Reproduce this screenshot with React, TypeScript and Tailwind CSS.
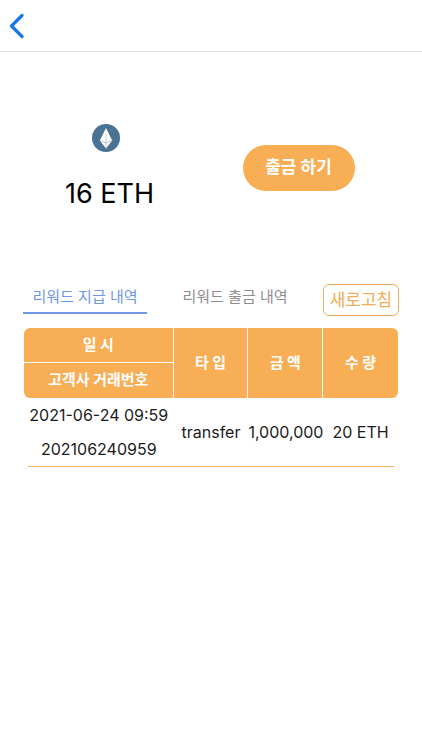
const headCell = "border-white bg-[#f7ae55] p-0 text-[15px] font-bold text-white";
const bodyCell = "p-0 text-[#1b1b1b]";

const rewards = [
  {
    date: "2021-06-24 09:59",
    reference: "202106240959",
    type: "transfer",
    amount: "1,000,000",
    quantity: "20 ETH",
  },
];

function EthereumIcon() {
  return (
    <svg className="size-7" viewBox="0 0 28 28" aria-hidden="true">
      <circle cx="14" cy="14" r="14" fill="#4a7293" />
      <path d="M14 4 L20.2 16.6 L14 24.6 L7.8 16.6 Z" fill="#fff" />
      <path d="M14 10 V24.6 M7.8 16.6 L14 18.8 L20.2 16.6" fill="none" stroke="#a9b3bb" strokeWidth="0.7" />
    </svg>
  );
}

export default function App() {
  return (
    <div className="min-h-screen bg-white font-['Inter','Noto_Sans_CJK_KR',sans-serif] text-black">
      <header className="flex h-[52px] items-center border-b border-[#e4e4e4] px-2">
        <button type="button" aria-label="뒤로" className="flex h-8 w-6 items-center">
          <svg className="h-7 w-4" viewBox="0 0 16 28" fill="none" aria-hidden="true">
            <path d="M14 3.5 L3.5 14 L14 24.5" stroke="#1877e8" strokeWidth="3.2" strokeLinecap="round" strokeLinejoin="round" />
          </svg>
        </button>
      </header>

      <main>
        <section className="grid grid-cols-2 pt-[72px]">
          <div className="flex flex-col items-center gap-[26px]">
            <EthereumIcon />
            <p className="pl-2 text-[27px] leading-8">16 ETH</p>
          </div>
          <div className="flex justify-center pt-[21px] pr-9">
            <button type="button" className="h-[46px] w-28 rounded-full bg-[#f7ae55] text-[17px] font-bold text-white">
              출금 하기
            </button>
          </div>
        </section>

        <section className="px-6 pt-[74px]">
          <div className="-mx-px flex h-8 items-start justify-between">
            <button type="button" className="h-[30px] w-[124px] border-b-2 border-[#7096e6] pb-0.5 text-[15px] text-[#7096e6]">
              리워드 지급 내역
            </button>
            <button type="button" className="h-[30px] border-b-2 border-transparent pb-0.5 text-[15px] text-[#8e8e8e]">
              리워드 출금 내역
            </button>
            <button type="button" className="h-8 w-[76px] rounded-md border border-[#f3ac58] pt-0.5 text-[17px] text-[#f3ac58]">
              새로고침
            </button>
          </div>

          <table className="mt-3 w-full table-fixed border-separate border-spacing-0 text-center">
            <colgroup>
              <col className="w-2/5" />
              <col className="w-1/5" />
              <col className="w-1/5" />
              <col className="w-1/5" />
            </colgroup>
            <thead>
              <tr className="h-[35px]">
                <th scope="col" className={`${headCell} rounded-tl-md border-r border-b`}>일 시</th>
                <th scope="col" rowSpan={2} className={`${headCell} border-r`}>타 입</th>
                <th scope="col" rowSpan={2} className={`${headCell} border-r`}>금 액</th>
                <th scope="col" rowSpan={2} className={`${headCell} rounded-r-md`}>수 량</th>
              </tr>
              <tr className="h-[35px]">
                <th scope="col" className={`${headCell} rounded-bl-md border-r`}>고객사 거래번호</th>
              </tr>
            </thead>
            {rewards.map((reward) => (
              <tbody key={reward.reference}>
                <tr className="h-[34px]">
                  <td className={bodyCell}>{reward.date}</td>
                  <td rowSpan={2} className={bodyCell}>{reward.type}</td>
                  <td rowSpan={2} className={bodyCell}>{reward.amount}</td>
                  <td rowSpan={2} className={bodyCell}>{reward.quantity}</td>
                </tr>
                <tr className="h-[34px]">
                  <td className={bodyCell}>{reward.reference}</td>
                </tr>
                <tr aria-hidden="true">
                  <td colSpan={4} className="px-1 py-0">
                    <div className="h-px bg-[#f6b15c]" />
                  </td>
                </tr>
              </tbody>
            ))}
          </table>
        </section>
      </main>
    </div>
  );
}
